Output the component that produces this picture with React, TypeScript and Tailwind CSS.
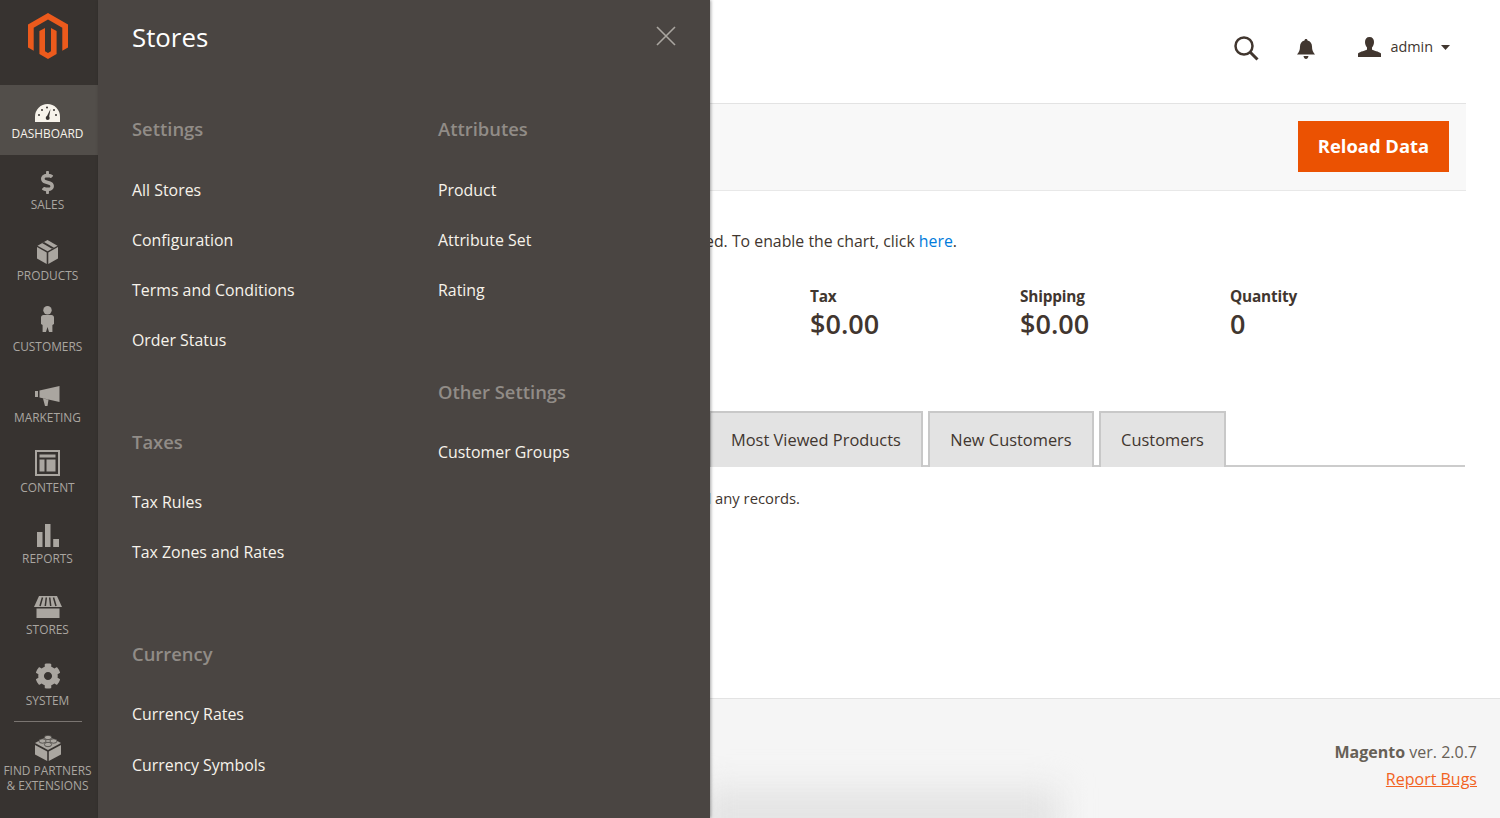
import { type ReactNode } from "react"
import { FaCog, FaDollarSign } from "react-icons/fa"

const navItems: { label: string; active?: boolean; icon: ReactNode }[] = [
  {
    label: "Dashboard",
    active: true,
    icon: (
      <svg width="25" height="18" viewBox="0 0 25 18">
        <path d="M0 18V12.500a12.500 12.500 0 0 1 25 0V18z" fill="currentColor" />
        <path d="M15.500 5 L14 13.500 L11.500 13 z" fill="#373330" />
        <circle cx="12.700" cy="14" r="2" fill="#373330" />
        <circle cx="4" cy="11" r="1" fill="#373330" />
        <circle cx="7" cy="6" r="1" fill="#373330" />
        <circle cx="12" cy="3.500" r="1" fill="#373330" />
        <circle cx="21" cy="11" r="1" fill="#373330" />
        <circle cx="19" cy="6" r="1" fill="#373330" />
      </svg>
    ),
  },
  { label: "Sales", icon: <FaDollarSign size={23} className="mb-[-1px]" /> },
  {
    label: "Products",
    icon: (
      <svg width="21" height="24" viewBox="0 0 21 24" fill="currentColor">
        <path d="M0 7l9.700 5.500V24L0 18.500zM21 7l-9.700 5.500V24L21 18.500z" />
        <path d="M10.500 0l10 5.700-9.900 5.600L.5 5.700z" />
        <path d="M5 3l10 5.800 2-1.100L7 1.900z" fill="#373330" />
      </svg>
    ),
  },
  {
    label: "Customers",
    icon: (
      <svg width="13" height="27" viewBox="0 0 13 27" fill="currentColor" className="mb-[2px]">
        <circle cx="6.500" cy="4.200" r="4.200" />
        <path d="M2.500 9h8c1.400 0 2.500 1 2.500 2.500V18l-1.600 1v7H8l-1.500-5L5 26H1.600V19L0 18v-6.500C0 10 1.100 9 2.500 9z" />
      </svg>
    ),
  },
  {
    label: "Marketing",
    icon: (
      <svg width="25" height="20" viewBox="0 0 25 20" fill="currentColor">
        <path d="M0 5h3v6H0zM4.500 4.500L24.500 0v16L4.500 11.500zM8 12.500l5.500 1.300L12.500 20H10z" />
      </svg>
    ),
  },
  {
    label: "Content",
    icon: (
      <svg width="25" height="26" viewBox="0 0 25 26" fill="currentColor">
        <path fillRule="evenodd" d="M0 0h25v26H0zM2 2v22h21V2z" />
        <path d="M4.500 4.500h16v3h-16zM4.500 9.500h5v12h-5zM11.500 9.500h9v12h-9z" />
      </svg>
    ),
  },
  {
    label: "Reports",
    icon: (
      <svg width="22" height="23" viewBox="0 0 22 23" fill="currentColor">
        <path d="M0 8h5.500v15H0zM8 0h5.500v23H8zM16.200 15H22v8h-5.800z" />
      </svg>
    ),
  },
  {
    label: "Stores",
    icon: (
      <svg width="28" height="22" viewBox="0 0 28 22" fill="currentColor">
        <path d="M5 0h18l5 11H0z" />
        <path d="M8.500 1.500L6 10M12.300 1.500L11.300 10M15.700 1.500L16.700 10M19.500 1.500L22 10" stroke="#373330" strokeWidth="1.500" />
        <path d="M2.500 12.500h23V22h-23z" />
      </svg>
    ),
  },
  { label: "System", icon: <FaCog size={26} /> },
]

const storeColumns = [
  [
    { title: "Settings", links: ["All Stores", "Configuration", "Terms and Conditions", "Order Status"] },
    { title: "Taxes", links: ["Tax Rules", "Tax Zones and Rates"] },
    { title: "Currency", links: ["Currency Rates", "Currency Symbols"] },
  ],
  [
    { title: "Attributes", links: ["Product", "Attribute Set", "Rating"] },
    { title: "Other Settings", links: ["Customer Groups"] },
  ],
]

const totals = [
  { label: "Tax", value: "$0.00" },
  { label: "Shipping", value: "$0.00" },
  { label: "Quantity", value: "0" },
]

const tabs = ["Most Viewed Products", "New Customers", "Customers"]

function Sidebar() {
  return (
    <aside className="w-[98px] shrink-0 h-full bg-[#373330] flex flex-col text-[#aaa6a0]">
      <div className="h-[85px] shrink-0 flex justify-center pt-[13px] pr-[2px]">
        <svg width="40" height="46" viewBox="0 0 40 46" fill="#ec5a1c">
          <path d="M20 0L40 11.500V34.500L34.300 37.800V14.800L20 6.600 5.700 14.800V37.800L0 34.500V11.500z" />
          <path d="M11.400 18.100L17 14.900V38.300L20 40 23 38.300V14.900L28.600 18.100V41L20 46 11.400 41z" />
        </svg>
      </div>
      {navItems.map((item) => (
        <div
          key={item.label}
          className={`shrink-0 flex flex-col items-center justify-end pr-[3px] ${item.active ? "h-[70px] pb-[14px] bg-[#524e4a] text-[#f7f3eb]" : "h-[70.9px] pb-[14px]"}`}
        >
          <div className="flex justify-center mb-[3px]">{item.icon}</div>
          <span className="text-[11.9px] leading-[16px] uppercase">{item.label}</span>
        </div>
      ))}
      <div className="h-px shrink-0 ml-[14px] mr-[16px] -mt-[1px] bg-[#7a7571]" />
      <div className="flex flex-col items-center pt-[12px] pr-[3px]">
        <svg width="26" height="27" viewBox="0 0 26 27" fill="currentColor">
          <path d="M13 2L26 9 13 16 0 9z" />
          <path d="M0 11l12.200 6.600V27L0 20.400zM26 11l-12.200 6.600V27L26 20.400z" />
          <ellipse cx="13" cy="3.500" rx="3.600" ry="2.200" stroke="#373330" strokeWidth=".7" />
          <ellipse cx="7.500" cy="7" rx="3.600" ry="2.200" stroke="#373330" strokeWidth=".7" />
          <ellipse cx="18.500" cy="7" rx="3.600" ry="2.200" stroke="#373330" strokeWidth=".7" />
          <ellipse cx="13" cy="10.500" rx="3.600" ry="2.200" stroke="#373330" strokeWidth=".7" />
        </svg>
        <span className="mt-[2px] text-[11.9px] leading-[15px] uppercase text-center">
          Find Partners
          <br />& Extensions
        </span>
      </div>
    </aside>
  )
}

function StoresPanel() {
  return (
    <section className="relative z-10 w-[612px] shrink-0 h-full bg-[#4a4542] shadow-[1px_0_3px_rgba(0,0,0,0.35)] pl-[34px]">
      <div className="h-[74px] flex items-center justify-between pr-[33px]">
        <h1 className="text-[25.800px] font-normal text-white">Stores</h1>
        <svg width="20" height="20" viewBox="0 0 20 20" stroke="#aaa6a0" strokeWidth="1.600" className="mb-[2px] mr-[1px]">
          <path d="M1 1l18 18M19 1L1 19" />
        </svg>
      </div>
      <div className="flex pt-[35px]">
        {storeColumns.map((column, i) => (
          <div key={i} className="w-[306px] shrink-0 flex flex-col gap-[55.300px]">
            {column.map((group) => (
              <div key={group.title}>
                <h2 className="h-[40px] flex items-center mb-[16.500px] text-[18.400px] font-semibold text-[#918c87]">{group.title}</h2>
                {group.links.map((link) => (
                  <div key={link} className="h-[50.200px] flex items-center text-[15.900px] text-[#f7f3eb]">
                    {link}
                  </div>
                ))}
              </div>
            ))}
          </div>
        ))}
      </div>
    </section>
  )
}

function Main() {
  return (
    <main className="flex-1 h-full overflow-hidden flex flex-col text-[#41362f]">
      <header className="h-[104px] w-[756px] shrink-0 border-b border-[#e3e3e3] flex items-center justify-end pr-[16px] pb-[8px]">
        <svg width="25" height="25" viewBox="0 0 25 25" fill="none" stroke="#41362f" strokeWidth="2.500" className="mr-[38px] mt-[1px]">
          <circle cx="10" cy="10" r="8.500" />
          <path d="M16 16l7.500 7.500" strokeWidth="3" />
        </svg>
        <svg width="18" height="20" viewBox="0 0 18 20" fill="#41362f" className="mr-[43px] mt-[3px]">
          <path d="M9 0c1 0 1.500.6 1.500 1.500 3 .8 4.500 3 4.500 6 0 4 1 5.500 3 8H0c2-2.500 3-4 3-8 0-3 1.500-5.200 4.500-6C7.500.6 8 0 9 0z" />
          <path d="M6.500 17h5c-.3 1.700-1.300 3-2.500 3s-2.200-1.300-2.500-3z" />
        </svg>
        <svg width="23" height="20" viewBox="0 0 23 20" fill="#41362f" className="mb-[2px]">
          <path d="M11.500 0c3 0 4.500 2 4.500 5 0 2.500-1 4.500-2 5.500v2c1 1 7 2 9 4V20H0v-3.500c2-2 8-3 9-4v-2c-1-1-2-3-2-5.500 0-3 1.500-5 4.500-5z" />
        </svg>
        <span className="ml-[9px] text-[14.400px] leading-none mb-[1px]">admin</span>
        <svg width="9" height="5" viewBox="0 0 9 5" fill="#41362f" className="ml-[8px]">
          <path d="M0 0h9L4.500 5z" />
        </svg>
      </header>

      <div className="h-[87px] w-[756px] shrink-0 bg-[#f8f8f8] border-b border-[#e8e8e8] flex items-center justify-end pr-[17px] pb-[2px]">
        <button className="h-[51px] w-[151px] bg-[#eb5202] text-white text-[18.400px] font-bold">Reload Data</button>
      </div>

      <div className="mt-[39px] h-[24px] w-[247px] flex justify-end items-center whitespace-nowrap text-[15.850px]">
        <p>
          Chart is disabled. To enable the chart, click <span className="text-[#007bdb]">here</span>.
        </p>
      </div>

      <div className="mt-[32px] pl-[100px] flex">
        {totals.map((total) => (
          <div key={total.label} className="w-[210px]">
            <div className="text-[15.400px] leading-[21px] font-bold tracking-[-0.2px]">{total.label}</div>
            <div className="text-[27px] leading-[34px] font-semibold">{total.value}</div>
          </div>
        ))}
      </div>

      <div className="mt-[69px] w-[755px] h-[57px] shrink-0 border-b-2 border-[#cccccc] flex items-end gap-[5.500px]">
        {tabs.map((tab, i) => (
          <div
            key={tab}
            className={`h-[56px] -mb-[2px] pt-[1px] bg-[#e3e3e3] border-2 border-b-0 border-[#c8c8c8] flex items-center text-[16.400px] px-[20px] ${i === 0 ? "-ml-[1px]" : ""}`}
          >
            {tab}
          </div>
        ))}
      </div>

      <div className="mt-[19px] h-[24px] w-[90px] flex justify-end items-center whitespace-nowrap text-[14.800px]">
        <p>We couldn't find any records.</p>
      </div>

      <footer className="relative mt-auto h-[120px] shrink-0 bg-[#f5f5f5] border-t border-[#e3e3e3] flex flex-col items-end pr-[23px] pt-[42px] text-[16px] overflow-hidden">
        <div className="absolute -left-[10px] -bottom-[30px] w-[360px] h-[60px] bg-[#e4e4e4] blur-[16px]" />
        <p className="relative leading-[22px] text-[#676056]">
          <span className="font-bold">Magento</span> ver. 2.0.7
        </p>
        <a className="relative mt-[5px] leading-[22px] text-[#f26322] underline">Report Bugs</a>
      </footer>
    </main>
  )
}

export default function App() {
  return (
    <div className="flex h-[818px] w-[1500px] overflow-hidden bg-white font-['Open_Sans',sans-serif]">
      <Sidebar />
      <StoresPanel />
      <Main />
    </div>
  )
}
